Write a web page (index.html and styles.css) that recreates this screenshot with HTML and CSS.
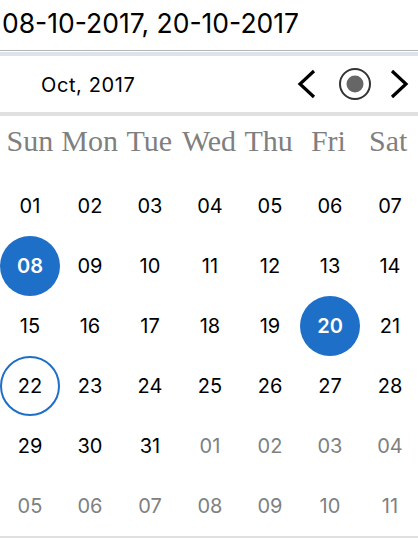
FILE: index.html
```html
<!DOCTYPE html>
<html>
<head>
<meta charset="utf-8">
<link rel="stylesheet" href="styles.css">
</head>
<body>
<div class="picker">
  <div class="input">08-10-2017, 20-10-2017</div>
  <div class="focus-band"></div>
  <div class="nav">
    <span class="month">Oct, 2017</span>
    <div class="nav-buttons">
      <svg class="icon" width="20" height="30" viewBox="0 0 20 30"><polyline points="17,2 3,15 17,28" fill="none" stroke="#000" stroke-width="3.2" stroke-linecap="butt" stroke-linejoin="miter"/></svg>
      <svg class="icon today" width="34" height="34" viewBox="0 0 34 34"><circle cx="17" cy="17" r="15" fill="none" stroke="#333" stroke-width="2"/><circle cx="17" cy="17" r="8.5" fill="#666"/></svg>
      <svg class="icon" width="20" height="30" viewBox="0 0 20 30"><polyline points="3,2 17,15 3,28" fill="none" stroke="#000" stroke-width="3.2" stroke-linecap="butt" stroke-linejoin="miter"/></svg>
    </div>
  </div>
  <div class="weekdays">
    <span>Sun</span><span>Mon</span><span>Tue</span><span>Wed</span><span>Thu</span><span>Fri</span><span>Sat</span>
  </div>
  <div class="days">
    <span class="day">01</span><span class="day">02</span><span class="day">03</span><span class="day">04</span><span class="day">05</span><span class="day">06</span><span class="day">07</span>
    <span class="day selected">08</span><span class="day">09</span><span class="day">10</span><span class="day">11</span><span class="day">12</span><span class="day">13</span><span class="day">14</span>
    <span class="day">15</span><span class="day">16</span><span class="day">17</span><span class="day">18</span><span class="day">19</span><span class="day selected">20</span><span class="day">21</span>
    <span class="day today-day">22</span><span class="day">23</span><span class="day">24</span><span class="day">25</span><span class="day">26</span><span class="day">27</span><span class="day">28</span>
    <span class="day">29</span><span class="day">30</span><span class="day">31</span><span class="day other">01</span><span class="day other">02</span><span class="day other">03</span><span class="day other">04</span>
    <span class="day other">05</span><span class="day other">06</span><span class="day other">07</span><span class="day other">08</span><span class="day other">09</span><span class="day other">10</span><span class="day other">11</span>
  </div>
</div>
</body>
</html>
```

FILE: styles.css
```css
html, body {
  margin: 0;
  padding: 0;
  background: #fff;
}
.picker {
  width: 418px;
  font-family: Inter, "Liberation Sans", sans-serif;
  color: #000;
}
.input {
  height: 51px;
  box-sizing: border-box;
  border-bottom: 1px solid #b4b4b4;
  padding: 6px 0 0 2px;
  font-size: 26.5px;
  line-height: 34px;
  white-space: nowrap;
}
.focus-band {
  height: 4px;
  margin-top: 1px;
  background: #dde3eb;
}
.nav {
  height: 60px;
  box-sizing: border-box;
  border-bottom: 4px solid #e0e0e0;
  display: flex;
  align-items: center;
  justify-content: space-between;
  padding: 0 9px 0 41px;
}
.month {
  font-size: 20px;
  letter-spacing: 0.6px;
  padding-top: 1px;
}
.nav-buttons {
  display: flex;
  align-items: center;
}
.icon {
  display: block;
}
.today {
  margin: 0 17px 0 21px;
}
.weekdays {
  display: grid;
  grid-template-columns: repeat(7, 1fr);
  height: 60px;
  box-sizing: border-box;
  padding-top: 8px;
  font-family: "Liberation Serif", serif;
  font-size: 30px;
  color: #7f7f7f;
  text-align: center;
  white-space: nowrap;
}
.days {
  display: grid;
  grid-template-columns: repeat(7, 1fr);
  grid-auto-rows: 60px;
  border-bottom: 2px solid #e0e0e0;
}
.day {
  display: flex;
  align-items: center;
  justify-content: center;
  font-size: 20px;
  width: 60px;
  height: 60px;
  box-sizing: border-box;
  border-radius: 50%;
  justify-self: center;
}
.day.selected {
  background: #1e6fc7;
  color: #fff;
  font-weight: 600;
}
.day.today-day {
  border: 2px solid #1e6fc7;
}
.day.other {
  color: #808080;
}
```
